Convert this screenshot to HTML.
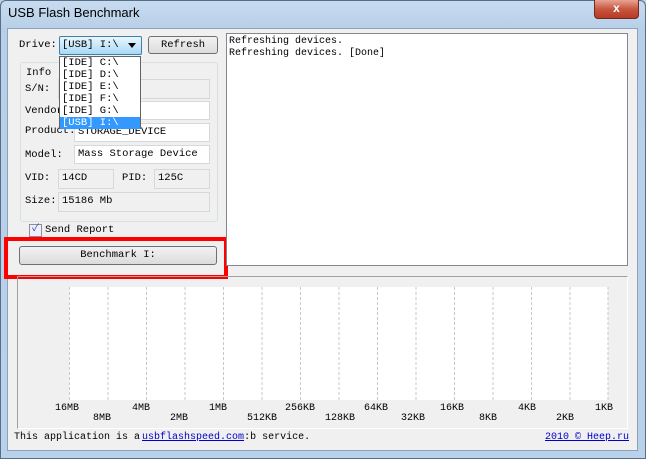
<!DOCTYPE html><html><head><style>
body{margin:0;width:646px;height:459px;overflow:hidden;background:#b9d1ea;font-family:"Liberation Mono","Noto Sans CJK SC",monospace;font-size:11px;color:#000}
.abs{position:absolute}
.win{position:absolute;left:0;top:0;width:644px;height:457px;border:1px solid #5a6e86;border-radius:6px 6px 0 0;background:linear-gradient(180deg,#c8dcf0 0,#b7cfe8 28px,#b9d1ea 100%)}
.client{position:absolute;left:7px;top:28px;width:631px;height:423px;background:#f0f0f0;border:1px solid #8da2b8;box-sizing:border-box}
.field{position:absolute;background:#f0f0f0;border:1px solid #d8d8d8;box-sizing:border-box;padding:2px 3px;font-size:10.5px}
.white{background:#fff}
.btn{position:absolute;border:1px solid #707070;border-radius:3px;background:linear-gradient(#f2f2f2,#dcdcdc);box-sizing:border-box;text-align:center}
</style></head><body>
<div class="win"></div>
<div class="abs" style="left:8px;top:5px;font-family:'Liberation Sans',sans-serif;font-size:13px">USB Flash Benchmark</div>
<div class="abs" style="left:594px;top:0;width:43px;height:18px;border:1px solid #6d2a20;border-top:none;border-radius:0 0 4px 4px;background:linear-gradient(#e8a493,#c85640 50%,#b83a24);color:#fff;font:bold 12px 'Liberation Sans',sans-serif;text-align:center;line-height:17px">x</div>
<div class="client"></div>
<div class="abs" style="left:19px;top:39px;font-size:10.5px">Drive:</div>
<div class="abs" style="left:59px;top:36px;width:83px;height:19px;border:1px solid #3c7fb1;border-radius:2px;background:linear-gradient(#eaf6fd,#a7d9f5);box-sizing:border-box;padding:2px 2px;font-size:10.5px">[USB] I:\ <span style="position:absolute;right:5px;top:6px;border:4px solid transparent;border-top:5px solid #000"></span></div>
<div class="btn" style="left:148px;top:36px;width:70px;height:18px;line-height:16px;font-size:10.5px">Refresh</div>
<div class="abs" style="left:20px;top:62px;width:196px;height:158px;border:1px solid #d5dfe5;border-radius:3px"></div>
<div class="abs" style="left:24px;top:67px;background:#f0f0f0;padding:0 2px;font-size:10.5px">Info</div>
<div class="abs" style="left:25px;top:83px;font-size:10.5px">S/N:</div>
<div class="field" style="left:58px;top:79px;width:152px;height:20px"></div>
<div class="abs" style="left:25px;top:105px;font-size:10.5px">Vendor:</div>
<div class="field white" style="left:74px;top:101px;width:136px;height:19px"></div>
<div class="abs" style="left:25px;top:125px;font-size:10.5px">Product:</div>
<div class="field white" style="left:74px;top:123px;width:136px;height:19px">STORAGE_DEVICE</div>
<div class="abs" style="left:25px;top:149px;font-size:10.5px">Model:</div>
<div class="field white" style="left:74px;top:145px;width:136px;height:19px">Mass Storage Device</div>
<div class="abs" style="left:25px;top:172px;font-size:10.5px">VID:</div>
<div class="field" style="left:58px;top:169px;width:56px;height:20px">14CD</div>
<div class="abs" style="left:122px;top:172px;font-size:10.5px">PID:</div>
<div class="field" style="left:154px;top:169px;width:56px;height:20px">125C</div>
<div class="abs" style="left:25px;top:195px;font-size:10.5px">Size:</div>
<div class="field" style="left:58px;top:192px;width:152px;height:20px">15186 Mb</div>
<div class="abs" style="left:59px;top:56px;width:82px;height:73px;background:#fff;border:1px solid #646464;box-sizing:border-box;font-size:10.5px;line-height:12px;padding-left:2px">[IDE] C:\<br>[IDE] D:\<br>[IDE] E:\<br>[IDE] F:\<br>[IDE] G:\<br><span style="display:block;margin-left:-2px;padding-left:2px;background:#3399ff;color:#fff">[USB] I:\</span></div>
<div class="abs" style="left:29px;top:224px;width:11px;height:11px;border:1px solid #8f8f8f;background:#eef;font-size:10px;line-height:10px;color:#2a4da8;text-align:center">✓</div>
<div class="abs" style="left:45px;top:224px;font-size:10.5px">Send Report</div>
<div class="abs" style="left:4px;top:237px;width:224px;height:42px;border:4px solid #f00;box-sizing:border-box"></div>
<div class="btn" style="left:19px;top:246px;width:198px;height:19px;line-height:17px;font-size:10.5px">Benchmark I:</div>
<div class="abs" style="left:226px;top:33px;width:402px;height:233px;background:#fff;border:1px solid #828790;box-sizing:border-box;padding:2px 2px;line-height:12px;font-size:10px">Refreshing devices.<br>Refreshing devices. [Done]</div>
<div class="abs" style="left:17px;top:276px;width:611px;height:153px;border:1px solid #a0a0a0;border-right-color:#fff;border-bottom-color:#fff;box-sizing:border-box"></div>
<svg class="abs" style="left:0;top:0" width="646" height="459">
<rect x="69" y="287" width="539" height="113" fill="#fff"/>
<g stroke="#c8c8c8" stroke-dasharray="3,2">
<line x1="69.5" y1="287" x2="69.5" y2="400"/><line x1="108" y1="287" x2="108" y2="400"/><line x1="146.5" y1="287" x2="146.5" y2="400"/><line x1="185" y1="287" x2="185" y2="400"/><line x1="223.5" y1="287" x2="223.5" y2="400"/><line x1="262" y1="287" x2="262" y2="400"/><line x1="300.5" y1="287" x2="300.5" y2="400"/><line x1="339" y1="287" x2="339" y2="400"/><line x1="377.5" y1="287" x2="377.5" y2="400"/><line x1="416" y1="287" x2="416" y2="400"/><line x1="454.5" y1="287" x2="454.5" y2="400"/><line x1="493" y1="287" x2="493" y2="400"/><line x1="531.5" y1="287" x2="531.5" y2="400"/><line x1="570" y1="287" x2="570" y2="400"/><line x1="608" y1="287" x2="608" y2="400"/>
</g>
<g font-family="Liberation Mono,monospace" font-size="10" text-anchor="middle">
<text x="67" y="410">16MB</text><text x="102" y="420">8MB</text><text x="141" y="410">4MB</text><text x="179" y="420">2MB</text><text x="218" y="410">1MB</text><text x="262" y="420">512KB</text><text x="300" y="410">256KB</text><text x="340" y="420">128KB</text><text x="376" y="410">64KB</text><text x="413" y="420">32KB</text><text x="452" y="410">16KB</text><text x="488" y="420">8KB</text><text x="527" y="410">4KB</text><text x="565" y="420">2KB</text><text x="604" y="410">1KB</text>
</g></svg>
<div class="abs" style="left:14px;top:432px;font-size:10px">This application is a <span style="color:#00c;text-decoration:underline;margin-left:-4px">usbflashspeed.com</span>:b service.</div>
<div class="abs" style="left:545px;top:432px;color:#00c;text-decoration:underline;font-size:10px">2010 © Heep.ru</div>
</body></html>
